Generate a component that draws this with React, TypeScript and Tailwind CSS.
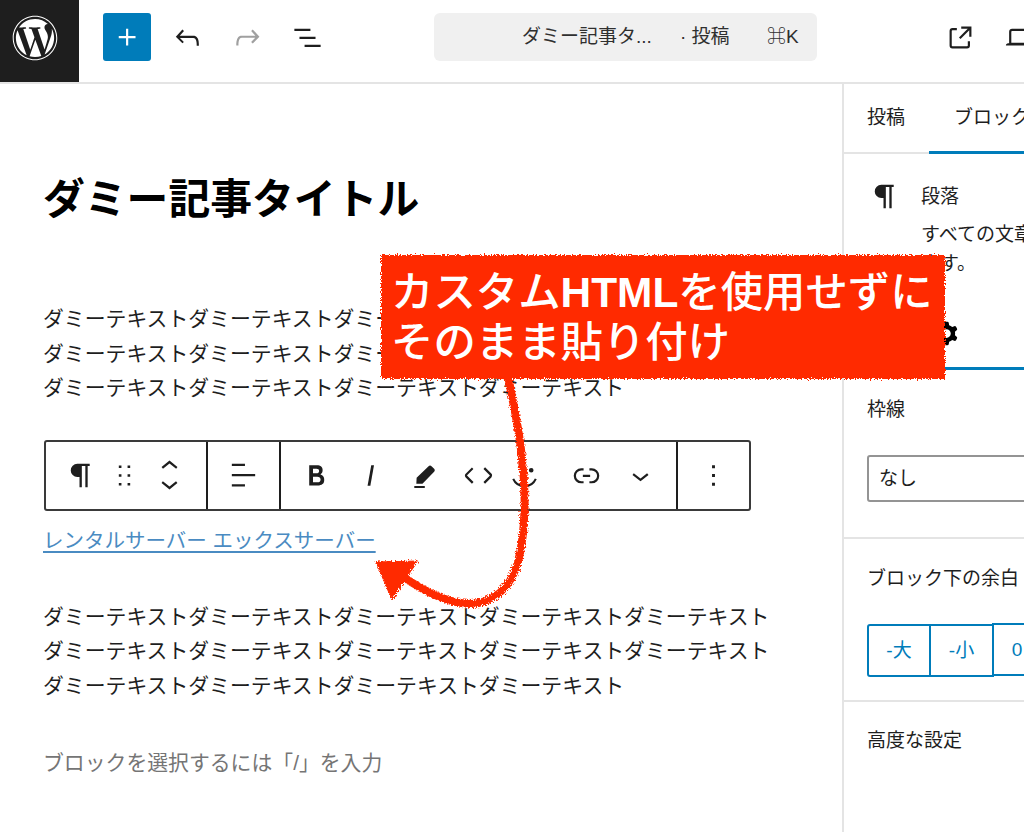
import { FaWordpress } from "react-icons/fa";

const font = "font-['Liberation_Sans','Noto_Sans_CJK_JP',sans-serif]";

// 24x24 の WordPress 風アイコン
function Icon({ d, className = "" }: { d: string; className?: string }) {
  return (
    <svg viewBox="0 0 24 24" className={`w-[35px] h-[35px] shrink-0 fill-current ${className}`}>
      <path d={d} fillRule="evenodd" />
    </svg>
  );
}

const icons = {
  plus: "M11 12.5V17.5H12.5V12.5H17.5V11H12.5V6H11V11H6V12.5H11Z",
  undo: "M18.3 11.7c-.6-.6-1.4-.9-2.3-.9H6.7l2.9-3.3-1.1-1-4.5 5L8.5 16l1-1-2.7-2.7H16c.5 0 .9.2 1.3.5 1 1 1 3.4 1 4.5v.3h1.5v-.2c0-1.5 0-4.3-1.5-5.7z",
  redo: "M15.6 6.5l-1.1 1 2.9 3.3H8c-.9 0-1.7.3-2.3.9-1.4 1.5-1.4 4.2-1.4 5.6v.2h1.5v-.3c0-1.1 0-3.5 1-4.5.3-.3.7-.5 1.3-.5h9.2L14.5 15l1.1 1.1 4.6-4.6-4.6-5z",
  list: "M3 6h11v1.5H3V6Zm3.5 5.5h11V13h-11v-1.5ZM21 17H10v1.5h11V17Z",
  external: "M19.5 4.5h-7V6h4.44l-5.97 5.97 1.06 1.06L18 7.06v4.44h1.5v-7Zm-13 1a2 2 0 0 0-2 2v10a2 2 0 0 0 2 2h10a2 2 0 0 0 2-2v-3H17v3a.5.5 0 0 1-.5.5h-10a.5.5 0 0 1-.5-.5v-10a.5.5 0 0 1 .5-.5h3V5.5h-3Z",
  desktop: "M20.5 16h-.7V8c0-1.1-.9-2-2-2H6.2c-1.1 0-2 .9-2 2v8h-.7c-.8 0-1.5.7-1.5 1.5h20c0-.8-.7-1.5-1.5-1.5zM5.7 8c0-.3.2-.5.5-.5h11.6c.3 0 .5.2.5.5v7.6H5.7V8z",
  para: "M19 4H10.5a4.5 4.5 0 0 0 0 9H12v7h1.6V5.5H16V20h1.6V5.5H19V4z",
  drag: "M8.1 6.9h1.8V5.1H8.1v1.8zm0 6h1.8v-1.8H8.1v1.8zm0 6h1.8v-1.8H8.1v1.8zm6-13.8v1.8h1.8V5.1h-1.8zm0 7.8h1.8v-1.8h-1.8v1.8zm0 6h1.8v-1.8h-1.8v1.8z",
  align: "M13 5.5H4V4h9v1.5Zm7 7H4V11h16v1.5Zm-7 7H4V18h9v1.5Z",
  bold: "M14.7 11.3c1-.6 1.5-1.6 1.5-3 0-2.3-1.3-3.4-4-3.4H7v14h5.8c1.4 0 2.5-.3 3.3-1 .8-.7 1.2-1.7 1.2-2.9.1-1.9-.8-3.1-2.6-3.7zm-5.1-4h2.3c.6 0 1.1.1 1.4.4.3.3.5.7.5 1.2s-.2 1-.5 1.2c-.3.3-.8.4-1.4.4H9.6V7.3zm4.6 9c-.4.3-1 .4-1.7.4H9.6v-3.9h2.9c.7 0 1.3.2 1.7.5.4.3.6.8.6 1.5s-.2 1.2-.6 1.5z",
  italic: "M12.5 5L10 19h1.9l2.5-14z",
  pen: "M5 19.2h7.2v1.4H5v-1.4ZM6.4 17.6l.2-4L14.8 5.6c.6-.6 1.4-.6 2 0l1.8 1.8c.6.6.6 1.4 0 2L10.6 17.6Z",
  code: "M20.8 10.7l-4.3-4.3-1.1 1.1 4.3 4.3c.1.1.1.3 0 .4l-4.3 4.3 1.1 1.1 4.3-4.3c.7-.8.7-1.9 0-2.6zM4.2 11.8l4.3-4.3-1-1-4.3 4.3c-.7.7-.7 1.8 0 2.5l4.3 4.3 1.1-1.1-4.3-4.3c-.2-.1-.2-.3-.1-.4z",
  smile: "M3.6 14.6l1.3-.6a7.8 7.8 0 0 0 14.2 0l1.3.6a9.2 9.2 0 0 1-16.8 0ZM15 8.4a1.6 1.6 0 1 0 3.2 0 1.6 1.6 0 1 0-3.2 0Z",
  link: "M10 17.389H8.444A5.194 5.194 0 1 1 8.444 7H10v1.5H8.444a3.694 3.694 0 0 0 0 7.389H10v1.5ZM14 7h1.556a5.194 5.194 0 0 1 0 10.39H14v-1.5h1.556a3.694 3.694 0 0 0 0-7.39H14V7Zm-4.5 6h5v-1.5h-5V13Z",
  chevronDown: "M17.5 11.6L12 16l-5.5-4.4.9-1.2L12 14l4.5-3.6 1 1.2z",
  more: "M13 19h-2v-2h2v2zm0-6h-2v-2h2v2zm0-6h-2V5h2v2z",
  cog: "M10.289 4.836A1 1 0 0 1 11.275 4h1.306a1 1 0 0 1 .987.836l.244 1.466c.787.26 1.503.679 2.108 1.218l1.393-.522a1 1 0 0 1 1.216.437l.653 1.13a1 1 0 0 1-.23 1.273l-1.148.944a6.025 6.025 0 0 1 0 2.435l1.149.946a1 1 0 0 1 .23 1.272l-.653 1.13a1 1 0 0 1-1.216.437l-1.394-.522c-.605.54-1.32.958-2.108 1.218l-.244 1.466a1 1 0 0 1-.987.836h-1.306a1 1 0 0 1-.986-.836l-.244-1.466a5.995 5.995 0 0 1-2.108-1.218l-1.394.522a1 1 0 0 1-1.217-.436l-.653-1.131a1 1 0 0 1 .23-1.272l1.149-.946a6.026 6.026 0 0 1 0-2.435l-1.148-.944a1 1 0 0 1-.23-1.272l.653-1.131a1 1 0 0 1 1.217-.437l1.393.522a5.994 5.994 0 0 1 2.108-1.218l.244-1.466ZM14.929 12a3 3 0 1 1-6 0 3 3 0 0 1 6 0Z",
};

const dummy = "ダミーテキスト";

function Header() {
  return (
    <header className="h-[84px] shrink-0 flex items-start border-b-2 border-[#e4e4e4] text-[#1e1e1e]">
      <div className="w-[79px] h-full shrink-0 pr-[9px] pb-[7px] bg-[#1e1e1e] flex items-center justify-center text-white">
        <FaWordpress className="w-[46px] h-[46px]" />
      </div>
      <div className="mt-[13px] h-[48px] flex items-center shrink-0">
        <button className="ml-[24px] w-[48px] h-[48px] shrink-0 rounded-[3px] bg-[#007cba] flex items-center justify-center text-white">
          <Icon d={icons.plus} />
        </button>
        <button className="ml-[6px] w-[60px] shrink-0 flex justify-center"><Icon d={icons.undo} /></button>
        <button className="w-[60px] shrink-0 flex justify-center text-[#a0a0a0]"><Icon d={icons.redo} /></button>
        <button className="w-[60px] shrink-0 flex justify-center"><Icon d={icons.list} /></button>
        <div className="ml-[97px] w-[383px] h-[48px] shrink-0 rounded-[6px] bg-[#f0f0f0] flex items-center text-[19px] text-[#2f2f2f]">
          <span className="ml-[88px] w-[158px]">ダミー記事タ...</span>
          <span className="w-[87px]">· 投稿</span>
          <span>⌘K</span>
        </div>
        <button className="ml-[113px] w-[60px] shrink-0 flex justify-center"><Icon d={icons.external} /></button>
        <button className="w-[60px] shrink-0 flex justify-center"><Icon d={icons.desktop} /></button>
      </div>
    </header>
  );
}

function BlockToolbar() {
  return (
    <div className="mt-[34px] ml-px w-[707px] h-[71px] flex rounded-[3px] border-2 border-[#3a3a3a] text-[#1e1e1e]">
      <div className="w-[162px] flex items-center pl-[16px] gap-[10px] border-r-2 border-[#1e1e1e]">
        <Icon d={icons.para} />
        <Icon d={icons.drag} />
        <svg viewBox="0 0 24 36" className="w-[35px] h-[52px] shrink-0 fill-current">
          <path d="M6.5 12.4L12 8l5.5 4.4-.9 1.2L12 10l-4.5 3.6-1-1.2z" />
          <path d="M17.5 23.6L12 28l-5.5-4.4.9-1.2L12 26l4.5-3.6 1 1.2z" />
        </svg>
      </div>
      <div className="w-[73px] flex items-center justify-center border-r-2 border-[#1e1e1e]">
        <Icon d={icons.align} />
      </div>
      <div className="w-[397px] flex items-center pl-[8px] border-r-2 border-[#1e1e1e]">
        <span className="w-[54px] flex justify-center"><Icon d={icons.bold} /></span>
        <span className="w-[54px] flex justify-center"><Icon d={icons.italic} /></span>
        <span className="w-[54px] flex justify-center"><Icon d={icons.pen} /></span>
        <span className="w-[54px] flex justify-center"><Icon d={icons.code} /></span>
        <span className="w-[38px] flex justify-center"><Icon d={icons.smile} /></span>
        <span className="ml-[16px] w-[54px] flex justify-center"><Icon d={icons.link} /></span>
        <span className="w-[54px] flex justify-center"><Icon d={icons.chevronDown} /></span>
      </div>
      <div className="flex-1 flex items-center justify-center">
        <Icon d={icons.more} />
      </div>
    </div>
  );
}

function Editor() {
  const line5 = dummy.repeat(5);
  const line4 = dummy.repeat(4);
  return (
    <main className="w-[842px] shrink-0 pl-[43px] text-[20.85px] leading-[34.5px] text-[#1e1e1e]">
      <h1 className="mt-[91px] text-[41.8px] leading-[50px] font-bold text-black">ダミー記事タイトル</h1>
      <div className="mt-[77px] whitespace-nowrap">
        <p>{line5}</p>
        <p>{line5}</p>
        <p>{line4}</p>
      </div>
      <BlockToolbar />
      <p className="mt-[13px] text-[20.5px]">
        <a className="text-[#4a8bc2] underline underline-offset-[3px]">レンタルサーバー エックスサーバー</a>
      </p>
      <div className="mt-[41.5px] whitespace-nowrap">
        <p>{line5}</p>
        <p>{line5}</p>
        <p>{line4}</p>
      </div>
      <p className="mt-[42.5px] text-[#757575]">ブロックを選択するには「/」を入力</p>
    </main>
  );
}

function Sidebar() {
  return (
    <aside className="w-[420px] shrink-0 border-l-2 border-[#e4e4e4] text-[19px] leading-[28px] text-[#1e1e1e]">
      <div className="h-[70px] flex border-b-2 border-[#e4e4e4]">
        <div className="w-[85px] pl-[23px] flex items-center">投稿</div>
        <div className="w-[190px] pl-[25px] flex items-center -mb-[2px] border-b-[3px] border-[#007cba]">ブロック</div>
      </div>
      <div className="flex pl-[23px] pt-[29px]">
        <Icon d={icons.para} className="w-[35px] -mt-[4px] -ml-px" />
        <div className="ml-[20px]">
          <div>段落</div>
          <p className="mt-[8.5px] w-[345px] leading-[29px]">すべての文章はこのブロックから始まります。</p>
        </div>
      </div>
      <div className="mt-[22.5px] h-[70px] pl-[85px] flex items-center border-b-[3px] border-[#007cba]">
        <Icon d={icons.cog} className="text-black" />
      </div>
      <div className="pl-[23px] pt-[26px] pb-[35px] border-b-2 border-[#e4e4e4]">
        <div>枠線</div>
        <div className="mt-[31px] h-[47px] w-[300px] pl-[10px] flex items-center rounded-[3px] border-2 border-[#949494]">なし</div>
      </div>
      <div className="pl-[23px] pt-[26px] pb-[23px] border-b-2 border-[#e4e4e4]">
        <div>ブロック下の余白</div>
        <div className="mt-[31px] h-[53px] flex text-[#007cba]">
          <button className="w-[64px] flex items-center justify-center rounded-l-[3px] border-2 border-[#007cba]">-大</button>
          <button className="-ml-[2px] w-[65px] flex items-center justify-center border-2 border-[#007cba]">-小</button>
          <button className="-ml-[2px] w-[50px] flex items-center justify-center border-2 border-[#007cba] -translate-y-px">0</button>
        </div>
      </div>
      <div className="pl-[23px] pt-[25px]">高度な設定</div>
    </aside>
  );
}

function Annotation() {
  return (
    <>
      <svg className="absolute inset-0 w-[1024px] h-[832px] pointer-events-none" viewBox="0 0 1024 832">
        <defs>
          <filter id="rough" x="-5%" y="-5%" width="110%" height="110%">
            <feTurbulence type="fractalNoise" baseFrequency="0.7" numOctaves="2" seed="4" />
            <feDisplacementMap in="SourceGraphic" scale="6" />
          </filter>
        </defs>
        <g filter="url(#rough)" className="fill-[#ff2a00] stroke-[#ff2a00]">
          <path
            d="M508 375 C512 400 520 430 522 460 C526 490 526 530 518 562 C510 590 492 602 472 604 C450 604 425 592 402 576"
            fill="none"
            strokeWidth="8"
            strokeLinecap="round"
          />
          <polygon points="376,562 418,561 406,578 392,600" strokeWidth="1" />
          <rect x="381" y="255" width="564" height="124" strokeWidth="0" />
        </g>
      </svg>
      <div className="absolute left-[391px] top-[268px] whitespace-nowrap text-[42.4px] leading-[50px] font-medium text-white">
        <div>カスタム<span className="font-bold">HTML</span>を使用せずに</div>
        <div>そのまま貼り付け</div>
      </div>
    </>
  );
}

export default function App() {
  return (
    <div className={`relative w-[1024px] h-[832px] overflow-hidden bg-white flex flex-col ${font}`}>
      <Header />
      <div className="flex flex-1 min-h-0">
        <Editor />
        <Sidebar />
      </div>
      <Annotation />
    </div>
  );
}
